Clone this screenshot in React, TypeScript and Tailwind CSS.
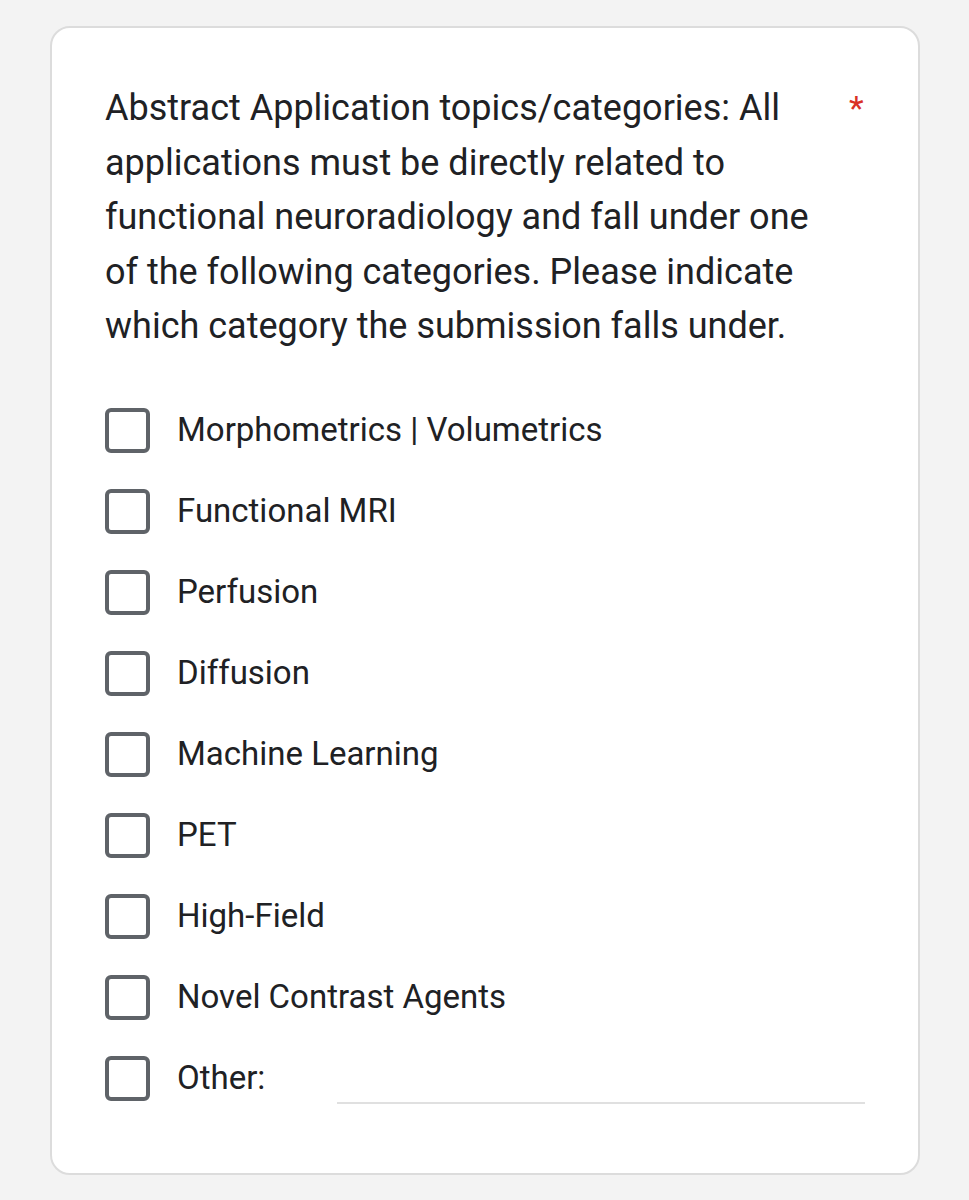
import React from "react";

const options = [
  "Morphometrics | Volumetrics",
  "Functional MRI",
  "Perfusion",
  "Diffusion",
  "Machine Learning",
  "PET",
  "High-Field",
  "Novel Contrast Agents",
];

function Box() {
  return <div className="w-[45px] h-[45px] shrink-0 rounded-[6px] border-[4px] border-[#5f6368] bg-white" />;
}

export default function App() {
  return (
    <div
      className="min-h-[1200px] bg-[#f3f3f3] pt-[26px] px-[50px] text-[#202124]"
      style={{ fontFamily: "Roboto, 'Noto Sans', sans-serif" }}
    >
      <div className="w-[870px] rounded-[20px] border-2 border-[#dcdcdc] bg-white pt-[53px] pb-[54px] pl-[53px] pr-[53px]">
        <div className="flex items-start">
          <div className="flex-1 pr-[24px] text-[36px] leading-[54.5px]">
            Abstract Application topics/categories: All applications must be directly related to functional neuroradiology and fall under one of the following categories. Please indicate which category the submission falls under.
          </div>
          <div className="w-[16px] text-[34px] leading-[54.5px] text-[#d93025]">*</div>
        </div>
        <div className="mt-[36px] flex flex-col">
          {options.map((o) => (
            <div key={o} className="flex h-[81px] items-center">
              <Box />
              <span className="ml-[27px] text-[33px]">{o}</span>
            </div>
          ))}
          <div className="flex h-[81px] items-center">
            <Box />
            <span className="ml-[27px] text-[33px]">Other:</span>
            <div className="ml-[72px] mt-[50px] h-[2px] flex-1 bg-[#e0e0e0]" />
          </div>
        </div>
      </div>
    </div>
  );
}
